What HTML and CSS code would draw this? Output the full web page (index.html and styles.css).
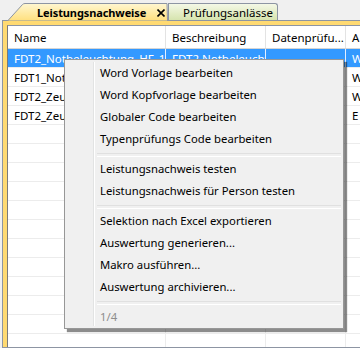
FILE: index.html
```html
<!DOCTYPE html>
<html lang="de">
<head>
<meta charset="utf-8">
<link rel="stylesheet" href="styles.css">
</head>
<body>
<div class="window">
  <div class="tabstrip">
    <div class="tab tab-active">
      <svg class="tab-shape" width="162" height="19" viewBox="0 0 162 19">
        <defs>
          <linearGradient id="ga" x1="0" y1="0" x2="0" y2="1">
            <stop offset="0" stop-color="#fff7d2"/>
            <stop offset="0.5" stop-color="#ffeba6"/>
            <stop offset="1" stop-color="#ffdf7c"/>
          </linearGradient>
        </defs>
        <path d="M0.5 19 L15.5 2.5 Q16.5 1.5 18 1.5 L160 1.5 L160.5 19 Z" fill="url(#ga)" stroke="#8d95a3" stroke-width="1"/>
      </svg>
      <span class="tab-label">Leistungsnachweise</span>
      <svg class="tab-close" width="8" height="8" viewBox="0 0 8 8"><path d="M0.5 0.5 L7.5 7.5 M7.5 0.5 L0.5 7.5" stroke="#000" stroke-width="1.6"/></svg>
    </div>
    <div class="tab tab-other">
      <span class="tab-label2">Prüfungsanlässe</span>
    </div>
  </div>
  <div class="panel">
    <div class="panel-inner">
      <div class="grid">
        <div class="row header">
          <div class="cell c1">Name</div>
          <div class="cell c2">Beschreibung</div>
          <div class="cell c3">Datenprüfu...</div>
          <div class="cell c4">A</div>
        </div>
        <div class="row selected">
          <div class="cell c1">FDT2_Notbeleuchtung_HF_15</div>
          <div class="cell c2">FDT2 Notbeleuchtung</div>
          <div class="cell c3"></div>
          <div class="cell c4">W</div>
        </div>
        <div class="row">
          <div class="cell c1">FDT1_Notbeleuchtung</div>
          <div class="cell c2"></div>
          <div class="cell c3"></div>
          <div class="cell c4">W</div>
        </div>
        <div class="row">
          <div class="cell c1">FDT2_Zeugnis</div>
          <div class="cell c2"></div>
          <div class="cell c3"></div>
          <div class="cell c4">W</div>
        </div>
        <div class="row">
          <div class="cell c1">FDT2_Zeugnis_2</div>
          <div class="cell c2"></div>
          <div class="cell c3"></div>
          <div class="cell c4">E</div>
        </div>
        <div class="row"><div class="cell c1"></div><div class="cell c2"></div><div class="cell c3"></div><div class="cell c4"></div></div>
        <div class="row"><div class="cell c1"></div><div class="cell c2"></div><div class="cell c3"></div><div class="cell c4"></div></div>
        <div class="row"><div class="cell c1"></div><div class="cell c2"></div><div class="cell c3"></div><div class="cell c4"></div></div>
        <div class="row"><div class="cell c1"></div><div class="cell c2"></div><div class="cell c3"></div><div class="cell c4"></div></div>
        <div class="row"><div class="cell c1"></div><div class="cell c2"></div><div class="cell c3"></div><div class="cell c4"></div></div>
        <div class="row"><div class="cell c1"></div><div class="cell c2"></div><div class="cell c3"></div><div class="cell c4"></div></div>
        <div class="row"><div class="cell c1"></div><div class="cell c2"></div><div class="cell c3"></div><div class="cell c4"></div></div>
        <div class="row"><div class="cell c1"></div><div class="cell c2"></div><div class="cell c3"></div><div class="cell c4"></div></div>
        <div class="row"><div class="cell c1"></div><div class="cell c2"></div><div class="cell c3"></div><div class="cell c4"></div></div>
        <div class="row"><div class="cell c1"></div><div class="cell c2"></div><div class="cell c3"></div><div class="cell c4"></div></div>
        <div class="row"><div class="cell c1"></div><div class="cell c2"></div><div class="cell c3"></div><div class="cell c4"></div></div>
        <div class="row"><div class="cell c1"></div><div class="cell c2"></div><div class="cell c3"></div><div class="cell c4"></div></div>
      </div>
    </div>
  </div>

  <div class="menu">
    <div class="menu-gutter"></div>
    <div class="item">Word Vorlage bearbeiten</div>
    <div class="item">Word Kopfvorlage bearbeiten</div>
    <div class="item">Globaler Code bearbeiten</div>
    <div class="item">Typenprüfungs Code bearbeiten</div>
    <div class="sep"></div>
    <div class="item">Leistungsnachweis testen</div>
    <div class="item">Leistungsnachweis für Person testen</div>
    <div class="sep"></div>
    <div class="item">Selektion nach Excel exportieren</div>
    <div class="item">Auswertung generieren...</div>
    <div class="item">Makro ausführen...</div>
    <div class="item">Auswertung archivieren...</div>
    <div class="sep"></div>
    <div class="item disabled">1/4</div>
  </div>
</div>
</body>
</html>
```

FILE: styles.css
```css
* { box-sizing: border-box; }
html, body {
  margin: 0;
  padding: 0;
  width: 360px;
  height: 348px;
  overflow: hidden;
  background: #f0f0f0;
  font-family: "Noto Sans", "Open Sans", sans-serif;
  font-size: 11px;
  color: #000;
}
.window {
  position: relative;
  width: 360px;
  height: 348px;
  padding-left: 2px;
  overflow: hidden;
}
.tabstrip {
  height: 20px;
  display: flex;
  align-items: flex-end;
  position: relative;
}
.tab {
  position: relative;
  height: 19px;
  display: flex;
  align-items: center;
}
.tab-active {
  width: 162px;
  margin-left: 5px;
  z-index: 2;
  margin-bottom: -1px;
  height: 20px;
  padding-top: 2px;
}
.tab-shape {
  position: absolute;
  left: 0;
  top: 1px;
}
.tab-label {
  position: relative;
  font-weight: bold;
  font-size: 11px;
  margin-left: 30px;
  letter-spacing: -0.1px;
}
.tab-close {
  position: relative;
  margin-left: 11px;
  margin-top: 2px;
}
.tab-other {
  width: 110px;
  height: 17px;
  margin-left: -1px;
  border: 1px solid #8d95a3;
  border-bottom: none;
  border-radius: 0 3px 0 0;
  background: linear-gradient(#f4f8e6, #e2ecc4 60%, #d6e4ae);
}
.tab-label2 {
  margin-left: 14px;
  margin-top: 1px;
  font-size: 11.5px;
}
.panel {
  width: 358px;
  height: 328px;
  border: 1px solid #8d95a3;
  border-right: none;
  background: #ffda72;
  padding: 4px 0 0 4px;
}
.panel-inner {
  height: 100%;
  border-top: 1px solid #8d95a3;
  border-left: 1px solid #7a7a7a;
  background: #fff;
  overflow: hidden;
}
.grid {
  display: flex;
  flex-direction: column;
}
.row {
  display: flex;
  flex: none;
  height: 19px;
  border-bottom: 1px solid #ececec;
}
.row.header {
  height: 23px;
  border-bottom: 1px solid #d5d5d5;
}
.cell {
  flex: none;
  padding-left: 6px;
  display: flex;
  align-items: center;
  white-space: nowrap;
  overflow: hidden;
  font-size: 11.5px;
  border-right: 1px solid #ececec;
}
.header .cell { border-right: 1px solid #e3e3e3; padding-top: 1px; }
.c1 { width: 158px; }
.c2 { width: 100px; }
.c3 { width: 80px; }
.c4 { width: 60px; }
.row.selected {
  background: #3399ff;
  color: #fff;
}
.row.selected .cell { border-right-color: #e4efff; }
.menu {
  position: absolute;
  left: 64px;
  top: 59px;
  width: 280px;
  height: 270px;
  background: #f0f0f0;
  border: 1px solid #979797;
  box-shadow: 3px 3px 1px rgba(0, 0, 0, 0.45);
  padding: 2px 2px 0 2px;
  z-index: 10;
}
.menu-gutter {
  position: absolute;
  left: 28px;
  top: 2px;
  bottom: 2px;
  width: 2px;
  border-left: 1px solid #e2e3e3;
  border-right: 1px solid #ffffff;
}
.item {
  position: relative;
  height: 22px;
  line-height: 22px;
  padding-left: 33px;
  white-space: nowrap;
  font-size: 11.3px;
}
.item.disabled { color: #8d8d8d; }
.sep {
  position: relative;
  height: 8px;
  margin-left: 28px;
  margin-right: 0;
}
.sep::before {
  content: "";
  position: absolute;
  left: 2px;
  right: 0;
  top: 3px;
  height: 2px;
  border-top: 1px solid #e0e0e0;
  border-bottom: 1px solid #ffffff;
}
```
